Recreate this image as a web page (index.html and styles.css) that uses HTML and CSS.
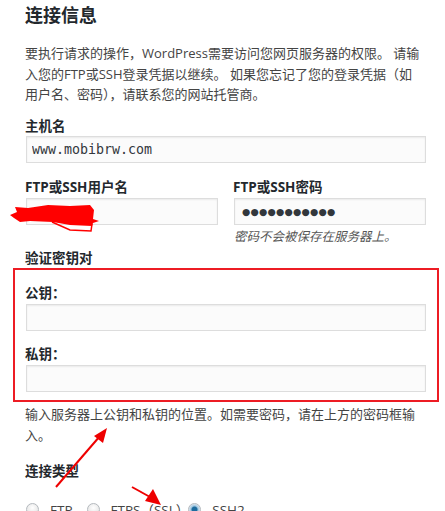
FILE: index.html
```html
<!DOCTYPE html>
<html lang="zh-CN">
<head>
    <meta charset="UTF-8">
    <meta name="viewport" content="width=device-width, initial-scale=1.0">
    <title>连接信息</title>
    <link rel="stylesheet" href="styles.css">
</head>
<body>
    <div class="page">
        <h2 class="title">连接信息</h2>
        <p class="intro">要执行请求的操作，WordPress需要访问您网页服务器的权限。 请输入您的FTP或SSH登录凭据以继续。 如果您忘记了您的登录凭据（如用户名、密码），请联系您的网站托管商。</p>

        <!-- 主机名 -->
        <label class="field-label" for="hostname">主机名</label>
        <input class="field" type="text" id="hostname" value="www.mobibrw.com">

        <!-- 用户名 / 密码 -->
        <div class="row">
            <div class="col">
                <label class="field-label" for="username">FTP或SSH用户名</label>
                <input class="field" type="text" id="username" value="">
            </div>
            <div class="col">
                <label class="field-label" for="password">FTP或SSH密码</label>
                <input class="field pass" type="text" id="password" value="●●●●●●●●●●●">
                <p class="hint">密码不会被保存在服务器上。</p>
            </div>
            <!-- 涂抹 -->
            <svg class="scribble" width="92" height="28" viewBox="0 0 92 28">
                <path d="M2 11 L9 8 L7 3 L20 4 L40 1 L62 2 L82 1 L86 6 L85 15 L91 17 L85 19 L84 22 L62 21 L45 18 L22 17 L12 18 L6 14 Z" fill="#f00"/>
                <path d="M44 18 L62 26 L83 27 L84 20" fill="none" stroke="#f00" stroke-width="1.5"/>
            </svg>
        </div>

        <!-- 验证密钥对 -->
        <div class="field-label pair-label">验证密钥对</div>
        <div class="keys">
            <label class="field-label" for="pubkey">公钥：</label>
            <input class="field" type="text" id="pubkey">
            <label class="field-label second" for="privkey">私钥：</label>
            <input class="field" type="text" id="privkey">
        </div>
        <p class="desc">输入服务器上公钥和私钥的位置。如需要密码，请在上方的密码框输入。</p>

        <!-- 连接类型 -->
        <div class="field-label type-label">连接类型</div>
        <div class="radios">
            <label class="radio"><span class="dot"></span>FTP</label>
            <label class="radio"><span class="dot"></span>FTPS（SSL）</label>
            <label class="radio"><span class="dot checked"></span>SSH2</label>
        </div>
    </div>

    <!-- 标注箭头 -->
    <svg class="arrows" width="445" height="511" viewBox="0 0 445 511">
        <line x1="56" y1="487" x2="100" y2="436" stroke="#e00" stroke-width="2"/>
        <polygon points="107,428 94,436 103,443" fill="#e00"/>
        <line x1="132" y1="487" x2="150" y2="497" stroke="#e00" stroke-width="2"/>
        <polygon points="161,505 145,501 153,489" fill="#e00"/>
    </svg>
</body>
</html>
```

FILE: styles.css
```css
body {
    margin: 0;
    background: #fff;
    color: #444;
    font-family: "Open Sans", "Noto Sans CJK SC", sans-serif;
    font-size: 13px;
}
.page {
    width: 401px;
    padding: 0 19px 0 25px;
}
.title {
    margin: 0;
    padding-top: 3px;
    font-size: 18px;
    line-height: 25px;
    color: #23282d;
}
.intro {
    margin: 15px 4px 0 0;
    line-height: 20.5px;
}
.field-label {
    display: block;
    margin-top: 11px;
    line-height: 20px;
    font-size: 13.5px;
    font-weight: bold;
    color: #23282d;
}
.field {
    display: block;
    box-sizing: border-box;
    width: 400px;
    height: 27px;
    margin: 0 0 0 1px;
    padding: 0 5px;
    border: 1px solid #ddd;
    background: #fbfbfb;
    box-shadow: inset 0 1px 2px rgba(0, 0, 0, 0.07);
    font-family: "DejaVu Sans Mono", monospace;
    font-size: 13.3px;
    color: #32373c;
}
.row {
    position: relative;
    display: flex;
    gap: 15px;
    margin-top: 14px;
}
.col .field-label {
    margin-top: 0;
    margin-bottom: 1px;
}
.col .field {
    width: 192px;
}
.pass {
    font-family: "DejaVu Sans", sans-serif;
    font-size: 9.5px;
    letter-spacing: 0.2px;
    padding-left: 7px;
}
.hint {
    margin: 2px 0 0 1px;
    line-height: 20px;
    font-size: 12.5px;
    font-style: italic;
    color: #555;
}
.scribble {
    position: absolute;
    left: -17px;
    top: 27px;
}
.pair-label {
    margin-top: 1px;
}
.keys {
    margin: 0 -13px 0 -12px;
    padding: 13px 10px 8px 10px;
    border: 2px solid #ed1c24;
}
.keys .field-label {
    margin-top: 0;
    margin-bottom: 1px;
}
.keys .second {
    margin-top: 13px;
}
.desc {
    margin: 2px 0 0;
    line-height: 21px;
}
.type-label {
    margin-top: 15px;
}
.radios {
    display: flex;
    gap: 13px;
    margin-top: 19px;
    line-height: 20px;
}
.radio {
    display: flex;
    align-items: center;
    gap: 11px;
    font-size: 13.5px;
    color: #444;
}
.radio:nth-child(3) {
    margin-left: -15px;
}
.dot {
    width: 13px;
    height: 13px;
    margin-left: 1px;
    border: 1px solid #b4b9be;
    border-radius: 50%;
    box-sizing: border-box;
    background: radial-gradient(circle at 50% 35%, #fff, #dcdcdc);
}
.dot.checked {
    background: radial-gradient(circle, #1e6c9e 0 2.5px, #9cc4de 3.5px, #e8eef4 6px);
}
.arrows {
    position: absolute;
    left: 0;
    top: 0;
    pointer-events: none;
}
```
